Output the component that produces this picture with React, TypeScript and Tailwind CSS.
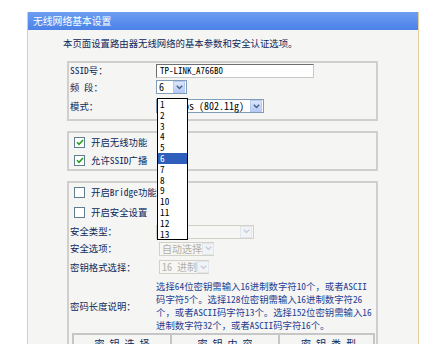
import React from 'react';

const font = "font-['Noto_Sans_Mono_CJK_SC','Noto_Sans_CJK_SC','Liberation_Mono',monospace]";

function Arrow({ disabled = false }: { disabled?: boolean }) {
  return (
    <span
      className={
        disabled
          ? 'flex h-[12px] w-[12px] shrink-0 items-center justify-center border border-[#e1e5ec] bg-[#f1f3f7]'
          : 'flex h-[12px] w-[12px] shrink-0 items-center justify-center border border-[#b7c9f1] bg-gradient-to-b from-[#dbe6fd] to-[#b5cbf6]'
      }
    >
      <svg width="7" height="5" viewBox="0 0 7 5">
        <path
          d="M0.8 0.8 L3.5 3.6 L6.2 0.8"
          fill="none"
          stroke={disabled ? '#c5ccd8' : '#4a5f86'}
          strokeWidth="1.4"
        />
      </svg>
    </span>
  );
}

function Select({
  text,
  width,
  disabled = false,
  pad = 'pl-[2px]',
}: {
  text: string;
  width: string;
  disabled?: boolean;
  pad?: string;
}) {
  return (
    <div
      className={`flex h-[14px] items-center justify-between border pr-[1px] ${pad} ${width} ${
        disabled ? 'border-[#d4d2c8] bg-[#f6f6f4] text-[#b3b0a6]' : 'border-[#7f9db9] bg-white text-black'
      }`}
    >
      <span className="whitespace-nowrap text-[10px] leading-none">{text}</span>
      <Arrow disabled={disabled} />
    </div>
  );
}

function Check({ checked }: { checked: boolean }) {
  return (
    <span className="flex h-[11px] w-[11px] shrink-0 items-center justify-center border border-[#5f7f8f] bg-white">
      {checked && (
        <svg width="8" height="7" viewBox="0 0 8 7">
          <path d="M1 3.3 L3 5.3 L7 1" fill="none" stroke="#21a121" strokeWidth="1.6" />
        </svg>
      )}
    </span>
  );
}

const box = 'ml-[4px] w-[311px] border-2 border-[#cfcfcf] bg-[#f5f5f3]';
const label = 'w-[87px] shrink-0 pl-[1px] whitespace-nowrap';

export default function App() {
  const channels = Array.from({ length: 13 }, (_, i) => i + 1);

  return (
    <div className={`relative h-[344px] w-[446px] overflow-hidden bg-white text-[9.4px] text-[#0f2759] ${font}`}>
      <div className="pl-[27px] pt-[12px]">
        <div className="h-[340px] w-[392px] border-l border-r border-[#e6cd9d] bg-[#f5f5f3]">
          <div className="h-[18px] bg-gradient-to-b from-[#6d9ef2] to-[#4c82e8] pl-[5px] text-[9.8px] leading-[18px] text-white">
            无线网络基本设置
          </div>

          <div className="pl-[35px]">
            <div className="mb-[12px] mt-[7px] leading-[12px]">本页面设置路由器无线网络的基本参数和安全认证选项。</div>

            <div className={`${box} pb-[3px]`}>
              <div className="flex h-[15px] items-center">
                <span className={label}>SSID号：</span>
                <div className="flex h-[14px] w-[158px] items-center border border-[#6e6e6e] border-b-[#c9c9c9] border-r-[#c9c9c9] bg-white pl-[3px] text-[9px] leading-none text-black">
                  TP-LINK_A766B0
                </div>
              </div>
              <div className="flex h-[18px] items-center">
                <span className={label}>频 段：</span>
                <Select text="6" width="w-[31px]" />
              </div>
              <div className="flex h-[20px] items-center">
                <span className={label}>模式：</span>
                <Select text="54Mbps (802.11g)" width="w-[108px]" pad="pl-[7px]" />
              </div>
            </div>

            <div className={`${box} mt-[10px]`}>
              <div className="flex h-[19px] items-center gap-[6px] pl-[5px]">
                <Check checked />
                <span>开启无线功能</span>
              </div>
              <div className="flex h-[17px] items-center gap-[6px] pl-[5px]">
                <Check checked />
                <span>允许SSID广播</span>
              </div>
            </div>

            <div className={`${box} mt-[10px] h-[200px] border-b-0`}>
              <div className="flex h-[18px] items-center gap-[6px] pl-[5px]">
                <Check checked={false} />
                <span>开启Bridge功能</span>
              </div>
              <div className="flex h-[23px] items-center gap-[6px] pl-[5px]">
                <Check checked={false} />
                <span>开启安全设置</span>
              </div>
              <div className="flex h-[15px] items-center">
                <span className={label}>安全类型：</span>
                <Select text="" width="w-[98px]" disabled />
              </div>
              <div className="flex h-[19px] items-center">
                <span className={label}>安全选项：</span>
                <div className="pl-[3px]">
                  <Select text="自动选择" width="w-[55px]" disabled />
                </div>
              </div>
              <div className="flex h-[18px] items-center">
                <span className={label}>密钥格式选择：</span>
                <div className="pl-[3px]">
                  <Select text="16 进制" width="w-[50px]" disabled />
                </div>
              </div>
              <div className="mt-[4px] flex items-center">
                <span className={label}>密码长度说明：</span>
                <div className="whitespace-nowrap leading-[13px] text-[#1d3f93]">
                  选择64位密钥需输入16进制数字符10个，或者ASCII
                  <br />
                  码字符5个。选择128位密钥需输入16进制数字符26
                  <br />
                  个，或者ASCII码字符13个。选择152位密钥需输入16
                  <br />
                  进制数字符32个，或者ASCII码字符16个。
                </div>
              </div>
              <div className="ml-[3px] mt-[1px] grid w-[303px] grid-cols-[98px_108px_97px] border-2 border-[#c6c6c6] text-[10px] leading-[18px]">
                <div className="border-r-2 border-[#c6c6c6] text-center">密 钥 选 择</div>
                <div className="border-r-2 border-[#c6c6c6] text-center">密 钥 内 容</div>
                <div className="text-center">密 钥 类 型</div>
              </div>
            </div>
          </div>
        </div>
      </div>

      <div className="absolute left-[157px] top-[98px] w-[31px] border border-black bg-white text-black">
        {channels.map((n) => (
          <div
            key={n}
            className={`h-[10.8px] pl-[2px] text-[9.3px] leading-[10.8px] ${n === 6 ? 'bg-[#2f5fbd] text-white' : ''}`}
          >
            {n}
          </div>
        ))}
      </div>
    </div>
  );
}
